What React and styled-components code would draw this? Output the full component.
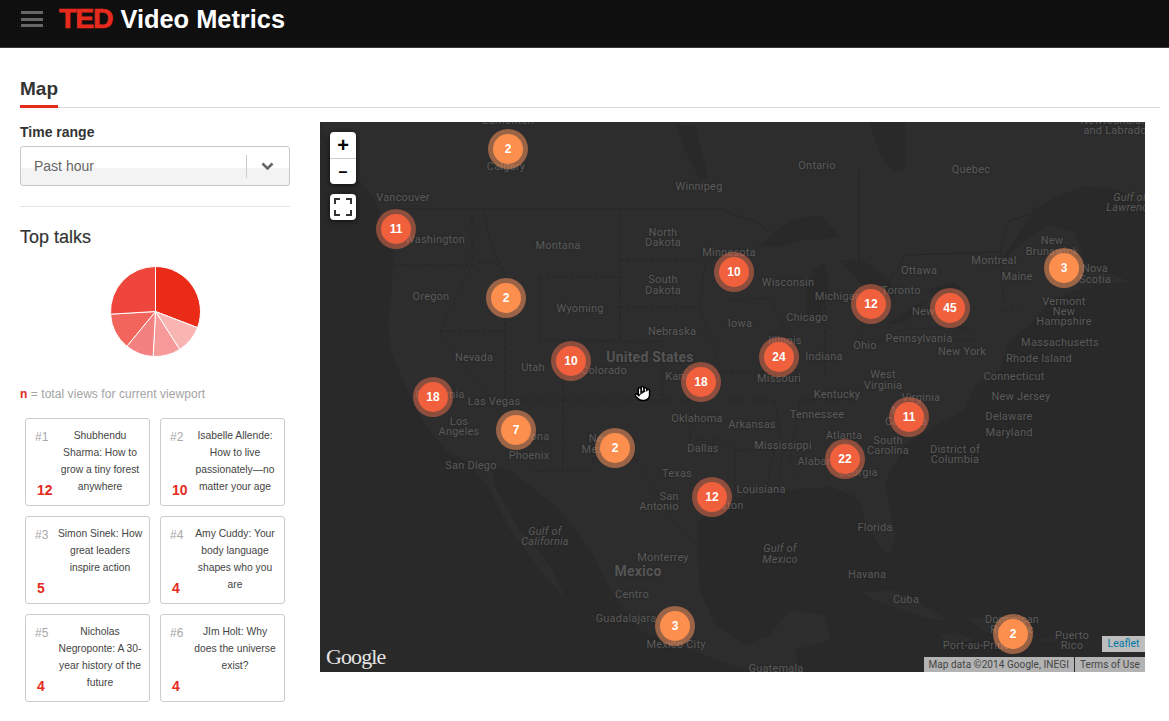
import React from "react";
import styled, { createGlobalStyle } from "styled-components";
import { Hand } from "lucide-react";

const Global = createGlobalStyle`
  html, body { margin: 0; padding: 0; background: #fff; overflow: hidden; }
  body { font-family: "Liberation Sans", Arial, sans-serif; color: #333; }
  * { box-sizing: border-box; }
`;

const Page = styled.div`width: 1169px; height: 721px; overflow: hidden;`;

const Header = styled.header`
  height: 48px; background: #0f0f0f; border-bottom: 1px solid #3a3a3a;
  display: flex; align-items: flex-start; padding: 6px 0 0 21px;
`;
const Burger = styled.div`
  width: 22px; height: 16px; margin: 5px 16px 0 0;
  display: flex; flex-direction: column; justify-content: space-between;
  span { display: block; height: 3px; background: #666; }
`;
const Brand = styled.div`
  font-size: 25.4px; line-height: 24px; font-weight: 700; color: #fff; white-space: nowrap;
  display: flex; align-items: baseline; gap: 8px;
`;
const Ted = styled.span`
  color: #e62b1e; font-size: 28.5px; font-weight: 700; letter-spacing: -1.2px;
  -webkit-text-stroke: .6px #e62b1e;
`;

const Main = styled.main`padding: 28px 9px 0 20px;`;
const TabBar = styled.div`height: 32px; border-bottom: 1px solid #d8d8d8;`;
const Tab = styled.h1`
  display: inline-block; margin: 0; height: 32px; font-size: 19px; line-height: 25px;
  font-weight: 700; color: #333; border-bottom: 3px solid #e62b1e;
`;
const Content = styled.div`
  display: grid; grid-template-columns: 270px 825px; column-gap: 30px; padding-top: 14px;
`;

const Side = styled.aside`display: flex; flex-direction: column;`;
const FieldLabel = styled.label`font-size: 14px; line-height: 20px; font-weight: 700; color: #333;`;
const Select = styled.div`
  margin-top: 4px; height: 40px; border: 1px solid #c8c8c8; border-radius: 3px;
  background: linear-gradient(#fff 0, #fff 21px, #f3f3f3 21px);
  display: flex; align-items: center; padding-left: 13px;
  font-size: 14px; color: #666;
`;
const SelectValue = styled.span`flex: 1; margin-top: -1px;`;
const SelectArrow = styled.span`
  width: 43px; height: 23px; border-left: 1px solid #ccc; padding-right: 2px;
  display: flex; align-items: center; justify-content: center;
`;
const Rule = styled.hr`margin: 20px 0 0; border: 0; border-top: 1px solid #e4e4e4; width: 270px;`;
const H2 = styled.h2`margin: 19px 0 0; font-size: 18px; line-height: 22px; font-weight: 400; color: #333; -webkit-text-stroke: .2px #333;`;
const PieWrap = styled.div`display: flex; justify-content: center; padding: 18px 0 0; height: 132px;`;
const Legend = styled.p`margin: 7px 0 0; font-size: 12px; line-height: 14px; color: #a3a3a3; letter-spacing: .06px; b { color: #e62b1e; }`;
const Cards = styled.div`
  display: grid; grid-template-columns: 125px 125px; grid-auto-rows: 88px; gap: 10px;
  padding: 17px 0 0 5px;
`;
const Card = styled.article`
  border: 1px solid #ccc; border-radius: 3px; display: flex; padding: 8px 5px 7px 9px; background: #fff;
`;
const CardLeft = styled.div`
  width: 21px; flex: none; display: flex; flex-direction: column; justify-content: space-between;
`;
const Rank = styled.span`font-size: 12px; line-height: 20px; color: #a8a8a8;`;
const Count = styled.span`font-size: 14px; line-height: 16px; font-weight: 700; color: #e62b1e; margin: 0 -6px 0 2px; position: relative;`;
const CardTitle = styled.p`
  margin: 0; flex: 1; text-align: center; font-size: 10.3px; line-height: 17px; color: #444;
`;

const MapBox = styled.section`
  position: relative; width: 825px; height: 550px; background: #2d2d2d; overflow: hidden;
  font-family: Roboto, "Liberation Sans", sans-serif;
`;
const Terrain = styled.svg`position: absolute; inset: 0; width: 825px; height: 550px; display: block;`;
const MapLabel = styled.span.attrs(p => ({ style: { left: p.$x - 320, top: p.$y - 122 } }))`
  position: absolute; transform: translate(-50%, -50%); white-space: nowrap;
  font-size: ${p => (p.$big ? 14 : 11)}px; font-weight: ${p => (p.$big ? 700 : 400)};
  font-style: ${p => (p.$it ? "italic" : "normal")};
  letter-spacing: .2px;
  color: ${p => (p.$big ? "#555" : "#5a5a5a")};
  text-shadow: 0 0 2px #252525;
  line-height: 11px;
`;
const Marker = styled.div.attrs(p => ({ style: { left: p.$x - 340, top: p.$y - 142 } }))`
  position: absolute; width: 40px; height: 40px; border-radius: 50%;
  background: ${p => (p.$warm ? "rgba(253,150,95,.53)" : "rgba(240,112,80,.5)")};
  display: flex; align-items: center; justify-content: center;
  font: 700 12px/1 "Liberation Sans", Arial, sans-serif; color: #fff;
  span {
    width: 30px; height: 30px; border-radius: 50%;
    background: ${p => (p.$warm ? "#fd8f4e" : "#f0603c")};
    display: flex; align-items: center; justify-content: center;
  }
`;
const ZoomBar = styled.div`
  position: absolute; left: 10px; top: 10px; width: 26px; height: 52px;
  background: #fff; border-radius: 4px; box-shadow: 0 1px 5px rgba(0,0,0,.65);
  display: flex; flex-direction: column;
`;
const ZoomBtn = styled.div`
  height: 26px; display: flex; align-items: center; justify-content: center;
  color: #000; font: 700 ${p => (p.$small ? 16 : 20)}px/1 "Liberation Sans", Arial, sans-serif;
  & + & { border-top: 1px solid #ccc; }
`;
const FullBtn = styled.div`
  position: absolute; left: 10px; top: 72px; width: 26px; height: 26px; background: #fff;
  border-radius: 4px; box-shadow: 0 1px 5px rgba(0,0,0,.65);
  display: flex; align-items: center; justify-content: center;
`;
const GoogleMark = styled.div`
  position: absolute; left: 6px; bottom: 2px; font: 400 22px/26px "Liberation Serif", serif;
  letter-spacing: -.9px; color: #e4e4e4;
`;
const Leaflet = styled.div`
  position: absolute; right: 0; bottom: 20px; height: 16px; width: 43px; background: #bdbdbd;
  color: #0078a8; font-size: 10.5px; line-height: 16px; text-align: center;
`;
const Attribution = styled.div`
  position: absolute; right: 0; bottom: 0; height: 15px; display: flex; gap: 1px;
  font-size: 10px; line-height: 15px; color: #444; letter-spacing: .07px;
`;
const AttrItem = styled.span`background: #b3b3b3; padding: 0 5px; height: 15px; white-space: nowrap;`;
const Cursor = styled.div`position: absolute; left: 314px; top: 263px; line-height: 0;`;

const TALKS = [
  ["Shubhendu Sharma: How to grow a tiny forest anywhere", 12],
  ["Isabelle Allende: How to live passionately—no matter your age", 10],
  ["Simon Sinek: How great leaders inspire action", 5],
  ["Amy Cuddy: Your body language shapes who you are", 4],
  ["Nicholas Negroponte: A 30-year history of the future", 4],
  ["JIm Holt: Why does the universe exist?", 4],
];

const SLICES = [
  [0, 111, "#e92b17"], [111, 147.5, "#f9b5b2"], [147.5, 183, "#f69b99"],
  [183, 219.5, "#f38180"], [219.5, 266.6, "#f1655c"], [266.6, 360, "#ee463d"],
];
const pt = (a, r = 45, c = 45.5) => {
  const t = (a * Math.PI) / 180;
  return `${(c + r * Math.sin(t)).toFixed(2)} ${(c - r * Math.cos(t)).toFixed(2)}`;
};
const Pie = () => (
  <svg width="91" height="91" viewBox="0 0 91 91">
    {SLICES.map(([a, b, f]) => (
      <path key={a} d={`M45.5 45.5L${pt(a)}A45 45 0 ${b - a > 180 ? 1 : 0} 1 ${pt(b)}Z`} fill={f} stroke="#fff" strokeWidth="1" />
    ))}
  </svg>
);

const MARKERS = [
  [508,149,2,1],[396,229,11],[506,298,2,1],[734,272,10],[1064,268,3,1],[871,304,12],[950,308,45],
  [571,361,10],[779,357,24],[701,382,18],[433,397,18],[516,430,7,1],[615,448,2,1],[909,417,11],
  [845,459,22],[712,497,12],[675,626,3,1],[1013,634,2,1],
];

const LABELS = [
  ["Edmonton",508,120],["Newfoundland",1117,120],["and Labrador",1117,130],["Calgary",506,166],["Vancouver",403,197],
  ["Washington",435,239],["Montana",558,245],["Oregon",431,296],["Wyoming",580,308],["Winnipeg",699,186],
  ["Ontario",817,165],["Quebec",971,169],["North",663,232],["Dakota",663,242],["South",663,279],["Dakota",663,290],
  ["Minnesota",729,252],["Wisconsin",788,282],["Michigan",838,296],["Chicago",807,317],["Toronto",901,290],
  ["Ottawa",919,270],["Montreal",994,260],["Maine",1017,276],["New",1052,240],["Brunswick",1052,251],
  ["Nova",1095,268],["Scotia",1095,279],["Vermont",1064,301],["New",1064,311],["Hampshire",1064,321],
  ["Massachusetts",1060,342],["Rhode Island",1039,358],["Connecticut",1014,376],["New Jersey",1021,396],
  ["Delaware",1009,416],["Maryland",1009,432],["District of",955,449],["Columbia",955,459],["South",888,440],
  ["Carolina",888,450],["Pennsylvania",919,338],["New York",962,351],["New York",936,311],["Ohio",865,345],
  ["Illinois",785,340],["Indiana",824,356],["Iowa",740,323],["Nebraska",672,331],["Missouri",779,378],
  ["Kansas",684,376],["Colorado",604,370],["Utah",533,367],["Nevada",474,357],["California",440,394],
  ["Las Vegas",494,401],["Los",459,421],["Angeles",459,431],["Arizona",530,436],["Phoenix",529,455],
  ["San Diego",471,465],["New",600,438],["Mexico",600,449],["Oklahoma",697,418],["Arkansas",752,424],
  ["Tennessee",817,414],["Kentucky",837,394],["West",883,374],["Virginia",883,385],["Virginia",921,397],
  ["North",906,410],["Carolina",906,421],["Atlanta",844,435],["Mississippi",783,445],["Alabama",820,461],
  ["Georgia",858,472],["Dallas",703,448],["Texas",677,473],["San",669,496],["Antonio",659,506],
  ["Louisiana",761,489],["Houston",722,505],["Florida",875,527],["Monterrey",663,557],["Centro",632,594],
  ["Havana",867,574],["Cuba",906,599],["Guadalajara",626,618],["Port-au-Prince",979,645],["Dominican",1012,619],
  ["Republic",1012,629],["Puerto",1072,635],["Rico",1072,645],["Mexico City",676,644],["Guatemala",776,668],
];
const ITALIC = [["Gulf of",780,548],["Mexico",780,559],["Gulf of",545,531],["California",545,541],["Gulf of",1130,197],["Lawrence",1130,207]];
const BIG = [["United States",650,357],["Mexico",638,571]];

const WATER = [
  "320,122 330,150 350,172 372,195 385,225 393,250 392,290 388,320 390,350 405,385 425,425 445,450 468,462 490,490 510,530 540,570 568,603 550,565 520,530 497,490 490,465 510,470 560,510 590,550 610,590 640,630 690,650 740,668 760,672 320,672",
  "697,540 697,522 720,505 745,495 790,490 830,487 858,498 866,522 880,548 890,555 895,535 885,483 905,445 935,425 965,410 975,385 1000,370 1010,340 1035,320 1050,300 1090,285 1130,282 1085,262 1075,232 1050,225 1028,238 1000,262 1012,245 1033,210 1060,195 1085,186 1120,190 1145,210 1145,672 800,672 795,650 830,640 825,615 790,610 770,635 745,645 715,625 700,590",
  "757,247 775,232 793,220 820,215 840,237 818,240 800,240 778,247",
  "813,270 825,262 829,287 822,310 815,320 807,315 806,295",
  "840,260 865,262 887,277 893,293 882,307 870,295 857,280",
  "885,325 915,305 928,302 905,322",
  "925,290 955,282 962,288 935,298",
  "675,125 695,125 708,178 700,180 685,150",
  "870,122 905,122 905,170 893,172 878,150",
];
const LAND = [
  "860,592 895,590 935,612 950,622 925,618 880,602",
  "965,618 1010,615 1035,632 1005,642 985,632",
  "940,635 955,632 975,640 950,645",
  "1040,638 1055,637 1058,642 1042,642",
];
const BORDERS = [
  "M392 209H722", "M722 209L735 215 757 222 770 232",
  "M879 300L905 255 1000 252 1008 222 1030 214",
  "M859 170V262",
];
const STATES = [
  "M472 209V265","M484 209L490 240 500 265 510 283 520 284 525 280","M620 209V340","M540 277H620V340H540Z","M620 260H703",
  "M620 307H705","M393 265H472 L482 262 500 265","M472 265L440 331","M440 331L490 400 500 415","M440 331H505","M505 280V400",
  "M505 400H563","M563 400V470","M563 340V400","M563 342H662V400","M563 400H662","M662 400H690V440L720 440 735 450 735 510",
  "M530 472L563 470 590 470 595 458H635","M635 458L680 530 697 545","M705 265L700 307 712 340 722 372","M712 372H772",
  "M722 400H775","M735 450H775 L765 490 785 490","M775 400L782 450 780 485","M800 400H860",
  "M800 400L790 460 800 480","M728 300L770 298","M770 298L790 340","M790 340L800 385","M825 300V375","M825 300H862","M862 300V350",
  "M862 350L900 330 930 328H970","M930 340H975","M970 300L960 320 978 350","M1000 240L1004 310","M1020 310H1000",
];

export default function App() {
  return (
    <Page>
      <Global />
      <Header>
        <Burger><span /><span /><span /></Burger>
        <Brand><Ted>TED</Ted><span>Video Metrics</span></Brand>
      </Header>
      <Main>
        <TabBar><Tab>Map</Tab></TabBar>
        <Content>
          <Side>
            <FieldLabel>Time range</FieldLabel>
            <Select>
              <SelectValue>Past hour</SelectValue>
              <SelectArrow>
                <svg width="13" height="9" viewBox="0 0 13 9"><path d="M1.5 1.5L6.5 6.5 11.5 1.5" fill="none" stroke="#666" strokeWidth="2.6" /></svg>
              </SelectArrow>
            </Select>
            <Rule />
            <H2>Top talks</H2>
            <PieWrap><Pie /></PieWrap>
            <Legend><b>n</b> = total views for current viewport</Legend>
            <Cards>
              {TALKS.map(([title, n], i) => (
                <Card key={i}>
                  <CardLeft><Rank>#{i + 1}</Rank><Count>{n}</Count></CardLeft>
                  <CardTitle>{title}</CardTitle>
                </Card>
              ))}
            </Cards>
          </Side>
          <MapBox>
            <Terrain viewBox="320 122 825 550">
              {WATER.map((p, i) => <polygon key={i} points={p} fill="#292929" />)}
              {LAND.map((p, i) => <polygon key={i} points={p} fill="#2d2d2d" />)}
              {BORDERS.map((d, i) => <path key={i} d={d} fill="none" stroke="#262626" strokeWidth="1" />)}
              {STATES.map((d, i) => <path key={i} d={d} fill="none" stroke="#272727" strokeWidth="1" strokeDasharray="4 2" />)}
            </Terrain>
            {LABELS.map(([t, x, y], i) => <MapLabel key={i} $x={x} $y={y}>{t}</MapLabel>)}
            {ITALIC.map(([t, x, y], i) => <MapLabel key={i} $x={x} $y={y} $it>{t}</MapLabel>)}
            {BIG.map(([t, x, y], i) => <MapLabel key={i} $x={x} $y={y} $big>{t}</MapLabel>)}
            {MARKERS.map(([x, y, n, w], i) => (
              <Marker key={i} $x={x} $y={y} $warm={!!w}><span>{n}</span></Marker>
            ))}
            <ZoomBar><ZoomBtn>+</ZoomBtn><ZoomBtn $small>–</ZoomBtn></ZoomBar>
            <FullBtn>
              <svg width="18" height="18" viewBox="0 0 18 18">
                <path d="M1 6V1H6M12 1H17V6M17 12V17H12M6 17H1V12" fill="none" stroke="#333" strokeWidth="2" />
              </svg>
            </FullBtn>
            <GoogleMark>Google</GoogleMark>
            <Leaflet>Leaflet</Leaflet>
            <Attribution>
              <AttrItem>Map data ©2014 Google, INEGI</AttrItem>
              <AttrItem>Terms of Use</AttrItem>
            </Attribution>
            <Cursor><Hand size={17} fill="#fff" color="#000" strokeWidth={2.2} /></Cursor>
          </MapBox>
        </Content>
      </Main>
    </Page>
  );
}
